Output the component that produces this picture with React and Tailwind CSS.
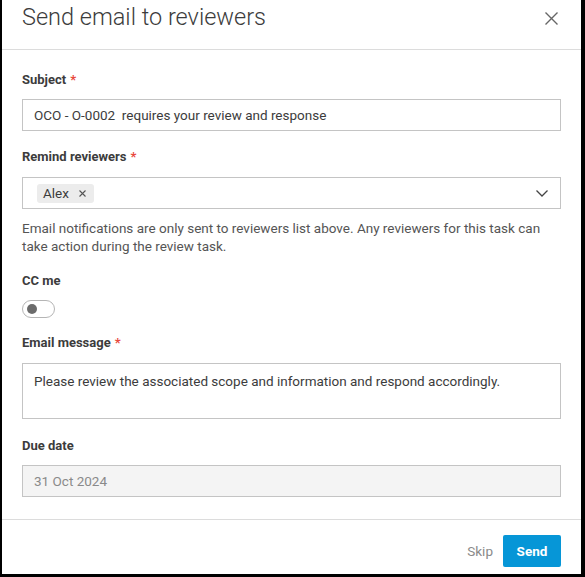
import React from "react";

function Label({ children, required }) {
  return (
    <div className="text-[13px] font-bold leading-[18px] text-[#3c3c3c]">
      {children}
      {required && <span className="ml-1 text-[#e8483d]">*</span>}
    </div>
  );
}

export default function App() {
  return (
    <div className="h-[577px] w-[585px] overflow-hidden border-b-[3px] border-l-2 border-r-4 border-black bg-white font-['Roboto',sans-serif] text-[#3c3c3c]">
      {/* Header */}
      <div className="flex h-[50px] items-start justify-between border-b border-[#dcdcdc] pl-5 pr-[22px]">
        <h1 className="pt-[2px] text-[23.5px] font-light leading-[30px] text-[#3c3c3c]">
          Send email to reviewers
        </h1>
        <button className="mt-[11px] text-[#666]">
          <svg width="15" height="15" viewBox="0 0 15 15" fill="none" stroke="currentColor" strokeWidth="1.4">
            <path d="M1.5 1.5l12 12M13.5 1.5l-12 12" />
          </svg>
        </button>
      </div>

      {/* Body */}
      <div className="px-5 pb-[22px] pt-[21px]">
        <Label required>Subject</Label>
        <div className="mt-[10px] flex h-[32px] items-center border border-[#c4c4c4] px-[11px] text-[13.5px]">
          OCO - O-0002&nbsp; requires your review and response
        </div>

        <div className="mt-[17px]">
          <Label required>Remind reviewers</Label>
        </div>
        <div className="mt-[11px] flex h-[32px] items-center justify-between border border-[#c4c4c4] pl-[14px] pr-[12px]">
          <span className="flex h-[19px] items-center gap-[10px] rounded-[3px] bg-[#ececec] pl-[6px] pr-[8px] text-[13.5px]">
            Alex
            <svg width="7" height="7" viewBox="0 0 7 7" stroke="#555" strokeWidth="1.1">
              <path d="M0.5 0.5l6 6M6.5 0.5l-6 6" />
            </svg>
          </span>
          <svg width="12" height="7" viewBox="0 0 12 7" fill="none" stroke="#444" strokeWidth="1.3">
            <path d="M0.5 0.5l5.5 5.5 5.5-5.5" />
          </svg>
        </div>
        <p className="mt-[10px] text-[13.5px] leading-[18px] text-[#555]">
          Email notifications are only sent to reviewers list above. Any reviewers for this task can take action during the review task.
        </p>

        <div className="mt-[17px]">
          <Label>CC me</Label>
        </div>
        <div className="mt-[10px] flex h-[18px] w-[33px] items-center rounded-full border border-[#b5b5b5] px-[4px]">
          <span className="h-[10px] w-[10px] rounded-full bg-[#6b6b6b]" />
        </div>

        <div className="mt-[16px]">
          <Label required>Email message</Label>
        </div>
        <div className="mt-[11px] h-[56px] border border-[#c4c4c4] px-[11px] pt-[8px] text-[13.5px] leading-[18px]">
          Please review the associated scope and information and respond accordingly.
        </div>

        <div className="mt-[18px]">
          <Label>Due date</Label>
        </div>
        <div className="mt-[10px] flex h-[32px] items-center border border-[#c4c4c4] bg-[#f4f4f4] px-[11px] text-[13.5px] text-[#8a8a8a]">
          31 Oct 2024
        </div>
      </div>

      {/* Footer */}
      <div className="flex items-center justify-end gap-[8px] border-t border-[#dcdcdc] px-5 pt-[15px]">
        <button className="px-[2px] text-[13.5px] text-[#8a8a8a]">Skip</button>
        <button className="h-[32px] w-[58px] rounded-[2px] bg-[#0696d7] text-[13.5px] font-bold text-white">
          Send
        </button>
      </div>
    </div>
  );
}
